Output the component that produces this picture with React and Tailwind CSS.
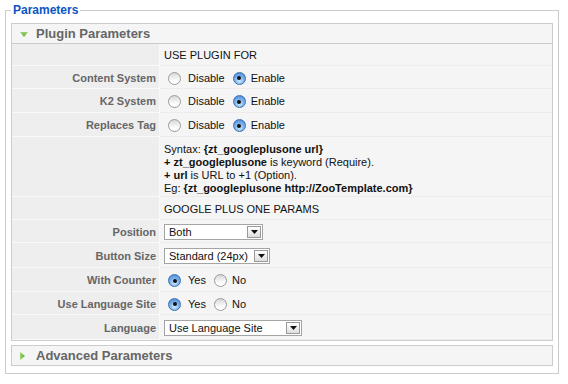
import React from "react";

const Radio = ({ checked }) =>
  checked ? (
    <span className="w-[13px] h-[13px] shrink-0 rounded-full border border-[#3d6fae] bg-[radial-gradient(circle_at_50%_70%,#d4ebff_0%,#7db4ee_45%,#3a7fd4_100%)] flex items-center justify-center">
      <span className="block w-[4px] h-[4px] rounded-full bg-[#111]" />
    </span>
  ) : (
    <span className="block w-[13px] h-[13px] shrink-0 rounded-full border border-[#9b9b9b] bg-[linear-gradient(#d8d8d8,#ffffff_75%)]" />
  );

const Arrow = () => (
  <span className="w-[14px] h-[12px] mr-[1px] ml-auto shrink-0 border border-[#9a9a9a] bg-[linear-gradient(#ffffff,#dedede)] flex items-center justify-center">
    <svg width="7" height="4" viewBox="0 0 7 4">
      <path d="M0 0H7L3.5 4Z" fill="#111" />
    </svg>
  </span>
);

const Select = ({ w, children }) => (
  <div className={`${w} h-[16px] bg-white border border-[#a5a5a5] flex items-center pl-[4px] text-[11px] text-[#111] leading-none`}>
    <span>{children}</span>
    <Arrow />
  </div>
);

const RadioPair = ({ a, b, first }) => (
  <div className="flex items-center text-[11px] text-[#111]">
    <span className="block ml-[4px] mr-[7px]">
      <Radio checked={first} />
    </span>
    <span className="mr-[8px]">{a}</span>
    <span className="block mr-[5px]">
      <Radio checked={!first} />
    </span>
    <span>{b}</span>
  </div>
);

const Row = ({ label, h, top, children }) => (
  <div className={`flex ${h}`}>
    <div className="w-[148px] shrink-0 bg-[#eeeeee] border-b border-r border-[#f9f9f9] flex items-center justify-end pr-[3px] pt-[2px] text-[11px] font-bold text-[#666]">
      {label}
    </div>
    <div
      className={
        top
          ? "flex-1 border-b border-[#ececec] flex items-start pl-[4px] pt-[6px]"
          : "flex-1 border-b border-[#ececec] flex items-center pl-[4px] pt-[2px]"
      }
    >
      {children}
    </div>
  </div>
);

const DownTri = () => (
  <svg width="8" height="5" viewBox="0 0 8 5" className="mr-[8px]">
    <defs>
      <linearGradient id="gd" x1="0" y1="0" x2="0" y2="1">
        <stop offset="0" stopColor="#9bd66b" />
        <stop offset="1" stopColor="#5ea83a" />
      </linearGradient>
    </defs>
    <path d="M0 0H8L4 5Z" fill="url(#gd)" />
  </svg>
);

const RightTri = () => (
  <svg width="5" height="8" viewBox="0 0 5 8" className="mr-[11px]">
    <defs>
      <linearGradient id="gr" x1="0" y1="0" x2="1" y2="0">
        <stop offset="0" stopColor="#9bd66b" />
        <stop offset="1" stopColor="#5ea83a" />
      </linearGradient>
    </defs>
    <path d="M0 0L5 4L0 8Z" fill="url(#gr)" />
  </svg>
);

export default function App() {
  return (
    <div className="w-[568px] h-[384px] bg-white font-['Liberation_Sans',Arial,sans-serif] pt-[2px] pl-[5px] pr-[9px]">
      <fieldset className="border border-[#cccccc] px-[5px] pb-[7px]">
        <legend className="px-[2px] text-[12px] leading-[16px] font-bold text-[#0b55c4]">Parameters</legend>
        <div className="mt-[5px] border border-[#cccccc] bg-[#f5f5f5]">
          <div className="h-[20px] border-b border-[#cccccc] bg-[#f5f5f5] flex items-center pl-[8px] pt-[1px] text-[13px] font-bold text-[#666]">
            <DownTri />
            Plugin Parameters
          </div>
          <div className="flex flex-col">
            <Row label="" h="h-[22px]">
              <span className="text-[11px] text-[#111]">USE PLUGIN FOR</span>
            </Row>
            <Row label="Content System" h="h-[23px]">
              <RadioPair a="Disable" b="Enable" first={false} />
            </Row>
            <Row label="K2 System" h="h-[24px]">
              <RadioPair a="Disable" b="Enable" first={false} />
            </Row>
            <Row label="Replaces Tag" h="h-[24px]">
              <RadioPair a="Disable" b="Enable" first={false} />
            </Row>
            <Row label="" h="h-[60px]" top>
              <div className="text-[11px] leading-[13px] text-[#111]">
                <div>
                  Syntax: <b>{"{zt_googleplusone url}"}</b>
                </div>
                <div>
                  <b>+ zt_googleplusone</b> is keyword (Require).
                </div>
                <div>
                  <b>+ url</b> is URL to +1 (Option).
                </div>
                <div>
                  Eg: <b>{"{zt_googleplusone http://ZooTemplate.com}"}</b>
                </div>
              </div>
            </Row>
            <Row label="" h="h-[23px]">
              <span className="text-[11px] text-[#111]">GOOGLE PLUS ONE PARAMS</span>
            </Row>
            <Row label="Position" h="h-[23px]">
              <Select w="w-[99px]">Both</Select>
            </Row>
            <Row label="Button Size" h="h-[25px]">
              <Select w="w-[106px]">Standard (24px)</Select>
            </Row>
            <Row label="With Counter" h="h-[24px]">
              <RadioPair a="Yes" b="No" first={true} />
            </Row>
            <Row label="Use Language Site" h="h-[23px]">
              <RadioPair a="Yes" b="No" first={true} />
            </Row>
            <Row label="Language" h="h-[25px]">
              <Select w="w-[138px]">Use Language Site</Select>
            </Row>
          </div>
        </div>
        <div className="mt-[4px] border border-[#cccccc] bg-[#f5f5f5]">
          <div className="h-[19px] flex items-center pl-[8px] pt-[1px] text-[13px] font-bold text-[#666]">
            <RightTri />
            Advanced Parameters
          </div>
        </div>
      </fieldset>
    </div>
  );
}
